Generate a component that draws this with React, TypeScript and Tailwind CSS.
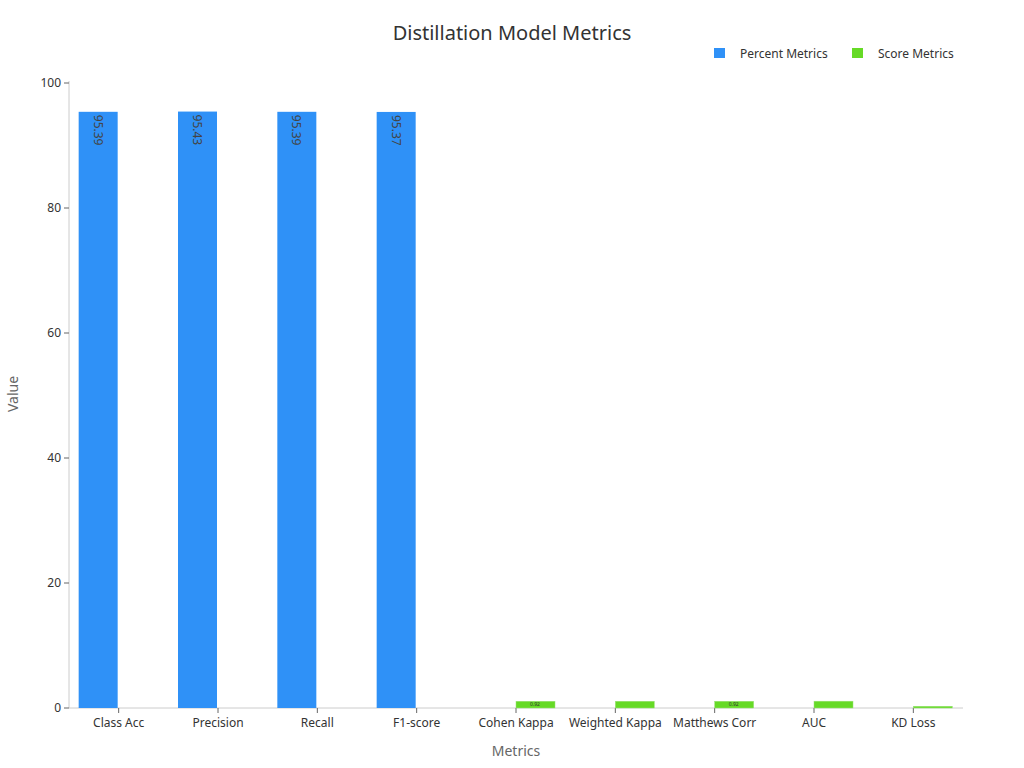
import React from "react";

const cats = ["Class Acc","Precision","Recall","F1-score","Cohen Kappa","Weighted Kappa","Matthews Corr","AUC","KD Loss"];
const blue: (number|null)[] = [95.39,95.43,95.39,95.37,null,null,null,null,null];
const green: (number|null)[] = [null,null,null,null,0.92,0.92,0.92,0.93,0.12];
const glabel = ["","","","","0.92","","0.92","",""];

export default function App() {
  const x0 = 69, x1 = 963, y0 = 708, y100 = 83;
  const bw = (x1 - x0) / 9;
  const sy = (v: number) => y0 - (v / 100) * (y0 - y100);
  return (
    <div className="w-[1024px] h-[768px] bg-white font-['DejaVu_Sans',sans-serif]">
      <svg width="1024" height="768">
        <text x="512" y="40" textAnchor="middle" fontSize="20" fill="#333">Distillation Model Metrics</text>
        <rect x="714" y="48" width="11" height="10" fill="#2f91f7" />
        <text x="740" y="58" fontSize="12" fill="#333">Percent Metrics</text>
        <rect x="852" y="48" width="11" height="10" fill="#66da26" />
        <text x="878" y="58" fontSize="12" fill="#333">Score Metrics</text>
        <line x1={x0} y1={y100 - 2} x2={x0} y2={y0} stroke="#ccc" />
        <line x1={x0} y1={y0} x2={x1} y2={y0} stroke="#ccc" />
        {[0,20,40,60,80,100].map(v => (
          <g key={v}>
            <line x1={x0 - 5} x2={x0} y1={sy(v)} y2={sy(v)} stroke="#666" />
            <text x={x0 - 8} y={sy(v) + 4} textAnchor="end" fontSize="12" fill="#333">{v}</text>
          </g>
        ))}
        {cats.map((c, i) => {
          const cx = x0 + bw * (i + 0.5);
          const b = blue[i], g = green[i];
          return (
            <g key={c}>
              <line x1={cx} x2={cx} y1={y0} y2={y0 + 5} stroke="#666" />
              <text x={cx} y={y0 + 19} textAnchor="middle" fontSize="12" fill="#333">{c}</text>
              {b !== null && (
                <g>
                  <rect x={cx - 40} y={sy(b)} width="39" height={y0 - sy(b)} fill="#2f91f7" />
                  <text transform={`translate(${cx - 25},${sy(b) + 3}) rotate(90)`} fontSize="12" fill="#444">{b.toFixed(2)}</text>
                </g>
              )}
              {g !== null && (
                <g>
                  <rect x={cx} y={sy(g) - 1} width="39" height={y0 - sy(g) + 1} fill="#66da26" stroke="#9be27a" strokeWidth="0.5" />
                  {glabel[i] && <text x={cx + 19} y={y0 - 2} textAnchor="middle" fontSize="5" fill="#333">{glabel[i]}</text>}
                </g>
              )}
            </g>
          );
        })}
        <text x="516" y="756" textAnchor="middle" fontSize="14" fill="#666">Metrics</text>
        <text transform="translate(18,394) rotate(-90)" textAnchor="middle" fontSize="14" fill="#666">Value</text>
      </svg>
    </div>
  );
}
